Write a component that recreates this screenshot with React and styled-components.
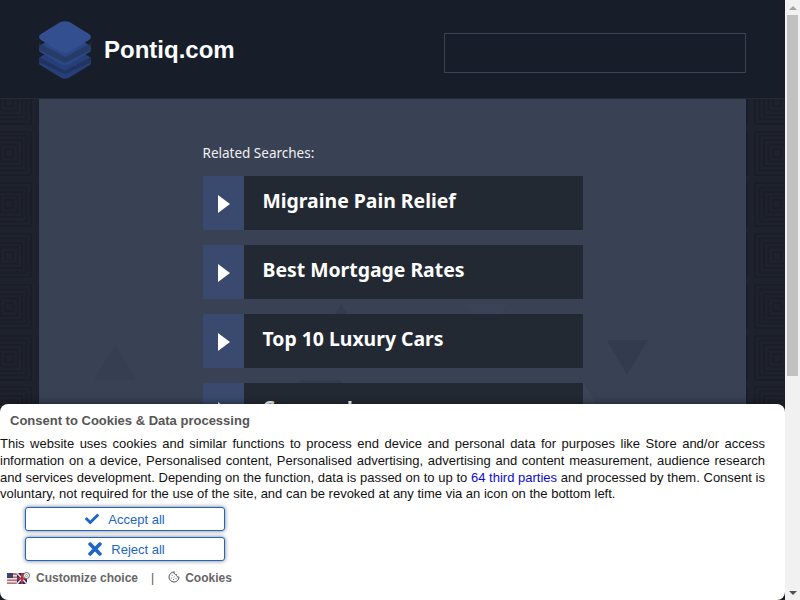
import React from 'react';
import styled, { createGlobalStyle } from 'styled-components';
import { FaCheck, FaTimes } from 'react-icons/fa';
import { Cookie } from 'lucide-react';

const patternSvg = (() => {
  const rings = [];
  for (let r = 4; r < 26; r += 4.4) {
    rings.push(`<rect x='${25.6 - r}' y='${25.6 - r}' width='${r * 2}' height='${r * 2}' fill='none' stroke='%231a1e28' stroke-width='2'/>`);
  }
  return `url("data:image/svg+xml,<svg xmlns='http://www.w3.org/2000/svg' width='51.2' height='51.2'>${rings.join('')}</svg>")`;
})();

const GlobalStyle = createGlobalStyle`
  html, body {
    margin: 0;
    padding: 0;
    height: 100%;
    overflow: hidden;
    background: #1e222d;
  }
  body {
    font-family: "Liberation Sans", Arial, sans-serif;
  }
`;

const Viewport = styled.div`
  display: flex;
  height: 100vh;
`;

const Page = styled.div`
  position: relative;
  flex: 1;
  min-width: 0;
  overflow: hidden;
`;

const ScrollTrack = styled.div`
  width: 15px;
  flex: none;
  background: #f1f1f1;
  display: flex;
  flex-direction: column;
  align-items: center;
`;

const ScrollButton = styled.div`
  height: 15px;
  width: 100%;
  display: flex;
  align-items: center;
  justify-content: center;
`;

const ScrollArrow = styled.span`
  display: block;
  width: 0;
  height: 0;
  border-left: 4px solid transparent;
  border-right: 4px solid transparent;
  ${props => (props.$down
    ? 'border-top: 4px solid #505050;'
    : 'border-bottom: 4px solid #a3a3a3;')}
`;

const ScrollThumb = styled.div`
  width: 11px;
  height: 361px;
  background: #c1c1c1;
`;

const ScrollSpace = styled.div`
  flex: 1;
`;

const Header = styled.header`
  height: 98px;
  background: #171e2a;
  border-bottom: 1px solid #232936;
`;

const HeaderInner = styled.div`
  width: 707px;
  height: 98px;
  margin: 0 auto;
  display: flex;
  align-items: center;
  justify-content: space-between;
`;

const Brand = styled.div`
  display: flex;
  align-items: center;
  gap: 13px;
  margin-top: 2px;
`;

const BrandName = styled.span`
  color: #ffffff;
  font-size: 24px;
  font-weight: bold;
`;

const SearchBox = styled.input`
  width: 300px;
  height: 38px;
  padding: 0;
  margin-top: 8px;
  background: transparent;
  border: 1px solid #3a4254;
  outline: none;
`;

const Backdrop = styled.div`
  height: 848px;
  background-color: #1e222d;
  background-image: ${patternSvg};
  background-size: 51.2px 51.2px;
  background-position: -16.6px -22.6px;
`;

const Panel = styled.main`
  position: relative;
  width: 707px;
  height: 100%;
  margin: 0 auto;
  background: #394155;
  padding-top: 45px;
  box-sizing: border-box;
  overflow: hidden;
`;

const Shapes = styled.svg`
  position: absolute;
  left: 0;
  top: 0;
  width: 707px;
  height: 400px;
`;

const Column = styled.div`
  position: relative;
  width: 380px;
  margin: 0 auto;
  display: flex;
  flex-direction: column;
  gap: 15px;
`;

const Label = styled.div`
  color: #f0f0f0;
  font-family: "Noto Sans", "Open Sans", sans-serif;
  font-size: 13.5px;
  line-height: 18px;
  margin-bottom: -1px;
`;

const Row = styled.a`
  display: flex;
  height: 54px;
  background: #232933;
  text-decoration: none;
`;

const ArrowBox = styled.span`
  width: 41px;
  flex: none;
  background: #3a4a6e;
  display: flex;
  align-items: center;
  justify-content: center;
`;

const Arrow = styled.span`
  display: block;
  width: 0;
  height: 0;
  border-style: solid;
  border-width: 9.5px 0 9.5px 12px;
  border-color: transparent transparent transparent #ffffff;
  margin-top: 1px;
  margin-left: 2px;
`;

const RowText = styled.span`
  color: #ffffff;
  font-family: "Noto Sans", "Open Sans", sans-serif;
  font-size: 19.4px;
  font-weight: 700;
  line-height: 50px;
  padding-left: 19px;
`;

const Consent = styled.aside`
  position: absolute;
  left: 0;
  right: 0;
  bottom: 0;
  height: 196px;
  background: #ffffff;
  border-radius: 8px;
  box-shadow: 0 0 8px rgba(0, 0, 0, 0.55);
  font-size: 13px;
  color: #000000;
`;

const ConsentTitle = styled.div`
  color: #555555;
  font-weight: bold;
  line-height: 16px;
  padding: 9px 0 0 10px;
`;

const ConsentBody = styled.p`
  margin: 7px 20px 0 0;
  line-height: 16.8px;
  text-align: justify;
  color: #111111;
`;

const ThirdParties = styled.a`
  color: #0a0ad2;
  text-decoration: none;
`;

const Buttons = styled.div`
  width: 200px;
  margin: 4px 0 0 25px;
  display: flex;
  flex-direction: column;
  gap: 6px;
`;

const ActionButton = styled.button`
  height: 24px;
  padding: 0;
  background: #ffffff;
  border: 1px solid #1c66c4;
  border-radius: 3px;
  box-shadow: 0 0 4px rgba(0, 0, 0, 0.55);
  color: #1c66c4;
  font-family: "Liberation Sans", Arial, sans-serif;
  font-size: 13px;
  display: flex;
  align-items: center;
  justify-content: center;
  gap: ${props => props.$gap}px;
`;

const Links = styled.div`
  display: flex;
  align-items: center;
  margin: 10px 0 0 7px;
  font-size: 12px;
  font-weight: bold;
  color: #666666;
`;

const FlagIcon = styled.svg`
  width: 23px;
  height: 13px;
  margin-right: 6px;
`;

const Divider = styled.span`
  font-weight: normal;
  color: #555555;
  margin: 0 14px 0 13px;
`;

const CookieWrap = styled.span`
  display: inline-flex;
  margin-right: 5px;
  position: relative;
  top: -1px;
  color: #555555;
`;

const LogoMark = () => (
  <svg width="52" height="58" viewBox="0 0 52 58">
    <path d="M22.5 24 L2 35.5 Q0 36.5 0 38 V42 Q0 43.5 2 44.6 L22 56.8 Q26 58.5 30 56.8 L50 44.6 Q52 43.5 52 42 V38 Q52 36.5 50 35.5 L29.5 24 Z" fill="#263f78" />
    <path d="M0 36 L26 50 L52 36 V41 L26 53 L0 41 Z" fill="#1f2f56" opacity="0.7" />
    <path d="M22.5 12 L2 24 Q0 25 0 27 V29 Q0 30.5 2 31.5 L22 43.5 Q26 45.5 30 43.5 L50 31.5 Q52 30.5 52 29 V27 Q52 25 50 24 L29.5 12 Z" fill="#2c4884" />
    <path d="M0 22 L26 36 L52 22 V29 L26 42 L0 29 Z" fill="#26375f" opacity="0.75" />
    <path d="M21 1.2 L2 13 Q0 14.5 0 16 Q0 17.5 2 19 L21 30.8 Q26 33 31 30.8 L50 19 Q52 17.5 52 16 Q52 14.5 50 13 L31 1.2 Q26 -0.6 21 1.2 Z" fill="#334f90" />
  </svg>
);

const Flags = () => (
  <FlagIcon viewBox="0 0 23 13">
    <rect x="0" y="1" width="12" height="11" fill="#b5737a" />
    <rect x="0" y="3" width="12" height="1.5" fill="#e8dcdc" />
    <rect x="0" y="6" width="12" height="1.5" fill="#e8dcdc" />
    <rect x="0" y="9" width="12" height="1.5" fill="#e8dcdc" />
    <rect x="0" y="1" width="6" height="5" fill="#3b4272" />
    <rect x="10" y="1" width="10" height="11" fill="#20265e" />
    <path d="M10 1 L20 12 M20 1 L10 12" stroke="#e8e0e0" strokeWidth="1.6" />
    <path d="M15 1 V12 M10 6.5 H20" stroke="#c0303c" strokeWidth="2" />
    <circle cx="19.5" cy="3.5" r="3" fill="#ffffff" stroke="#666666" strokeWidth="1" />
    <circle cx="19.5" cy="3.5" r="1" fill="#ffffff" stroke="#777777" strokeWidth="0.7" />
  </FlagIcon>
);

const searches = [
  'Migraine Pain Relief',
  'Best Mortgage Rates',
  'Top 10 Luxury Cars',
  'Caravan Loans',
];

const App = () => (
  <Viewport>
    <GlobalStyle />
    <Page>
      <Header>
        <HeaderInner>
          <Brand>
            <LogoMark />
            <BrandName>Pontiq.com</BrandName>
          </Brand>
          <SearchBox type="text" />
        </HeaderInner>
      </Header>
      <Backdrop>
        <Panel>
          <Shapes viewBox="0 0 707 400">
            <path d="M76 246 L97 281 L55 281 Z" fill="#363e51" />
            <path d="M568 241 L609 241 L588 276 Z" fill="#333b4e" />
            <path d="M302 205 L312 222 L292 222 Z" fill="#333b4e" />
            <path d="M425 205 L468 205 L461 216 L432 216 Z" fill="#3b4358" />
            <path d="M260 281 L303 281 L295 295 L268 295 Z" fill="#333b4e" />
            <path d="M544 283 L560 309 L544 309 Z" fill="#3d4559" />
          </Shapes>
          <Column>
            <Label>Related Searches:</Label>
            {searches.map(text => (
              <Row key={text}>
                <ArrowBox><Arrow /></ArrowBox>
                <RowText>{text}</RowText>
              </Row>
            ))}
          </Column>
        </Panel>
      </Backdrop>
      <Consent>
        <ConsentTitle>Consent to Cookies &amp; Data processing</ConsentTitle>
        <ConsentBody>
          This website uses cookies and similar functions to process end device and personal data for purposes like Store and/or access information on a device, Personalised content, Personalised advertising, advertising and content measurement, audience research and services development. Depending on the function, data is passed on to up to <ThirdParties>64 third parties</ThirdParties> and processed by them. Consent is voluntary, not required for the use of the site, and can be revoked at any time via an icon on the bottom left.
        </ConsentBody>
        <Buttons>
          <ActionButton $gap={9}><FaCheck size={14} />Accept all</ActionButton>
          <ActionButton $gap={6}><FaTimes size={20} />Reject all</ActionButton>
        </Buttons>
        <Links>
          <Flags />
          <span>Customize choice</span>
          <Divider>|</Divider>
          <CookieWrap><Cookie size={12} /></CookieWrap>
          <span>Cookies</span>
        </Links>
      </Consent>
    </Page>
    <ScrollTrack>
      <ScrollButton><ScrollArrow /></ScrollButton>
      <ScrollThumb />
      <ScrollSpace />
      <ScrollButton><ScrollArrow $down /></ScrollButton>
    </ScrollTrack>
  </Viewport>
);

export default App;
